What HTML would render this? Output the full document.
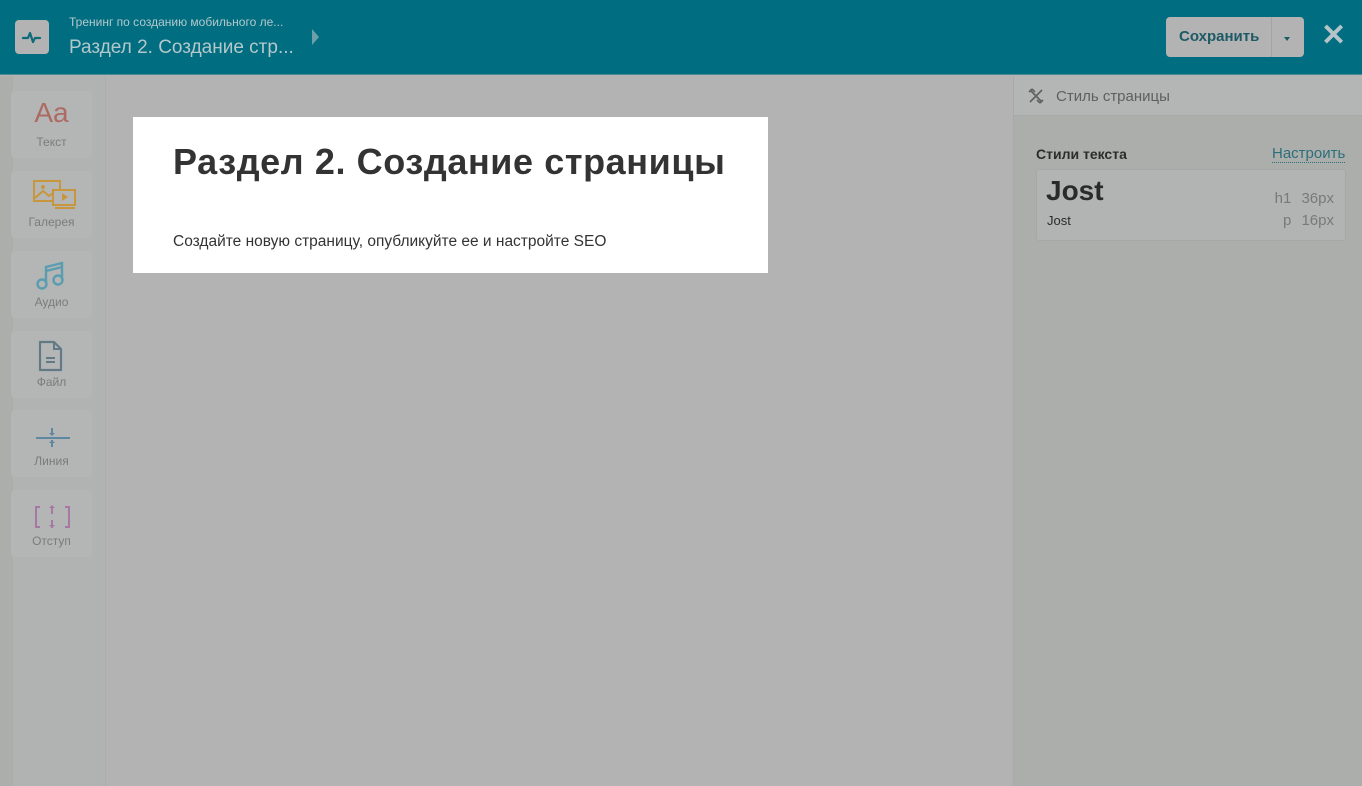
<!DOCTYPE html>
<html><head><meta charset="utf-8"><style>
*{box-sizing:border-box;margin:0;padding:0}
body{width:1362px;height:786px;overflow:hidden;background:#b3b3b3;font-family:"Liberation Sans",sans-serif;position:relative}
.hdr{position:absolute;left:0;top:0;width:1362px;height:75px;background:#006d80;border-bottom:1px solid #4a8a94}
.logo{position:absolute;left:15px;top:20px;width:34px;height:34px;background:#b3b3b3;border-radius:4px}
.crumb1{position:absolute;left:69px;top:15px;font-size:12px;color:#b4c8cc}
.crumb2{position:absolute;left:69px;top:37px;font-size:19px;color:#b4c8cc}
.tri{position:absolute;left:312px;top:29px;width:0;height:0;border-left:7px solid #6d9fa8;border-top:8px solid transparent;border-bottom:8px solid transparent}
.save{position:absolute;left:1166px;top:17px;width:138px;height:40px;background:#b3b3b3;border-radius:4px}
.save span{position:absolute;left:13px;top:11px;font-size:15px;font-weight:bold;color:#1e5a66}
.save i{position:absolute;left:105px;top:0;width:1px;height:40px;background:#a4a4a4}
.save b{position:absolute;left:118px;top:20px;border-top:4px solid #1e5a66;border-left:3px solid transparent;border-right:3px solid transparent}
.x{position:absolute;left:1321px;top:19px;font-size:30px;font-weight:bold;color:#b4c4c8;line-height:34px}
.side{position:absolute;left:0;top:76px;width:106px;height:710px;background:#b1b3b2;border-right:1px solid #acacac}
.side:before{content:"";position:absolute;left:0;top:0;width:13px;height:100%;background:#acaeac}
.tile{position:absolute;left:11px;width:81px;height:67px;background:#b4b6b5;border-radius:4px;text-align:center}
.tile .l{position:absolute;left:0;right:0;bottom:9px;font-size:12px;color:#7a7c7b}
.tile svg{position:absolute;left:22px;top:8px}
.card{position:absolute;left:133px;top:117px;width:635px;height:156px;background:#fff}
.card h1{position:absolute;left:40px;top:24px;font-size:36px;font-weight:bold;color:#333;letter-spacing:0.6px;white-space:nowrap}
.card p{position:absolute;left:40px;top:116px;font-size:15.5px;color:#333;white-space:nowrap}
.rp{position:absolute;left:1013px;top:76px;width:349px;height:710px;background:#acaeac;border-left:1px solid #a9a9a9}
.rph{position:absolute;left:0;top:0;width:349px;height:40px;background:#b4b6b5;border-bottom:1px solid #a7a9a8}
.rph span{position:absolute;left:42px;top:12px;font-size:15px;color:#5e6060}
.st{position:absolute;left:22px;top:70px;font-size:14px;font-weight:bold;color:#2c2c2c}
.nas{position:absolute;left:258px;top:69px;font-size:15px;color:#2c6f7a;border-bottom:1px dotted #2c6f7a;line-height:17px}
.box{position:absolute;left:22px;top:93px;width:310px;height:72px;background:#b2b4b3;border:1px solid #a6a8a7;border-radius:3px}
.j1{position:absolute;left:9px;top:5px;font-size:28px;font-weight:bold;color:#2a2a2a}
.j2{position:absolute;left:10px;top:43px;font-size:13px;color:#2a2a2a}
.s1{position:absolute;right:11px;top:20px;font-size:15px;color:#787a79;word-spacing:6px}
.s2{position:absolute;right:11px;top:42px;font-size:15px;color:#787a79;word-spacing:6px}
</style></head><body>
<div class="hdr">
 <div class="logo"><svg width="34" height="34" viewBox="0 0 34 34"><path d="M8 18h5l2-5 3 9 2-4h5" fill="none" stroke="#0e6a78" stroke-width="2.2" stroke-linejoin="round" stroke-linecap="round"/></svg></div>
 <div class="crumb1">Тренинг по созданию мобильного ле...</div>
 <div class="crumb2">Раздел 2. Создание стр...</div>
 <div class="tri"></div>
 <div class="save"><span>Сохранить</span><i></i><b></b></div>
 <div class="x">✕</div>
</div>
<div class="side">
 <div class="tile" style="top:15px"><div style="position:absolute;left:0;right:0;top:6px;font-size:28px;color:#ad6a62">Aa</div><div class="l">Текст</div></div>
 <div class="tile" style="top:95px"><svg width="48" height="34" viewBox="0 0 48 34"><rect x="1" y="2" width="26" height="20" fill="none" stroke="#c8963c" stroke-width="2"/><circle cx="10" cy="8" r="2" fill="#c8963c"/><path d="M2 19l8-7 6 5 4-3 7 6" fill="none" stroke="#c8963c" stroke-width="2"/><rect x="20" y="11" width="22" height="15" fill="#b4b6b5" stroke="#c8963c" stroke-width="2"/><path d="M29 14l6 4-6 4z" fill="#c8963c"/><path d="M22 29h20" stroke="#c8963c" stroke-width="2"/></svg><div class="l">Галерея</div></div>
 <div class="tile" style="top:175px"><svg width="40" height="34" viewBox="0 0 40 34"><path d="M13 24V8l16-4v16" fill="none" stroke="#5a9cb0" stroke-width="2.4"/><path d="M13 12l16-4" stroke="#5a9cb0" stroke-width="2.4"/><circle cx="9" cy="25" r="4.5" fill="none" stroke="#5a9cb0" stroke-width="2.4"/><circle cx="25" cy="21" r="4.5" fill="none" stroke="#5a9cb0" stroke-width="2.4"/></svg><div class="l">Аудио</div></div>
 <div class="tile" style="top:255px"><svg width="40" height="34" viewBox="0 0 40 34"><path d="M7 3h14l7 7v21H7z" fill="none" stroke="#627a88" stroke-width="2.2" stroke-linejoin="round"/><path d="M21 3v7h7M13 19h9M13 23h9" fill="none" stroke="#627a88" stroke-width="2"/></svg><div class="l">Файл</div></div>
 <div class="tile" style="top:334px"><svg width="40" height="34" viewBox="0 0 40 34"><path d="M3 20h34" stroke="#5e88a0" stroke-width="2"/><path d="M19 10v7M19 22v7" stroke="#5e88a0" stroke-width="2"/><path d="M16 15l3 3 3-3zM16 25l3-3 3 3z" fill="#5e88a0"/></svg><div class="l">Линия</div></div>
 <div class="tile" style="top:414px"><svg width="40" height="34" viewBox="0 0 40 34"><path d="M7 9H3v20h4M32 9h4v20h-4" fill="none" stroke="#a878a4" stroke-width="2"/><path d="M19 8v8M19 22v8" stroke="#a878a4" stroke-width="2"/><path d="M16 10l3-3 3 3zM16 27l3 3 3-3z" fill="#a878a4"/></svg><div class="l">Отступ</div></div>
</div>
<div class="card"><h1>Раздел 2. Создание страницы</h1><p>Создайте новую страницу, опубликуйте ее и настройте SEO</p></div>
<div class="rp">
 <div class="rph"><svg style="position:absolute;left:13px;top:11px" width="18" height="18" viewBox="0 0 18 18"><path d="M3 3l12 12M15 3L3 15M2 5l3-3M13 16l3-3M5 2l3 3M10 13l3 3" fill="none" stroke="#5e6060" stroke-width="1.6"/></svg><span>Стиль страницы</span></div>
 <div class="st">Стили текста</div>
 <div class="nas">Настроить</div>
 <div class="box"><div class="j1">Jost</div><div class="j2">Jost</div><div class="s1">h1 36px</div><div class="s2">p 16px</div></div>
</div>
</body></html>
